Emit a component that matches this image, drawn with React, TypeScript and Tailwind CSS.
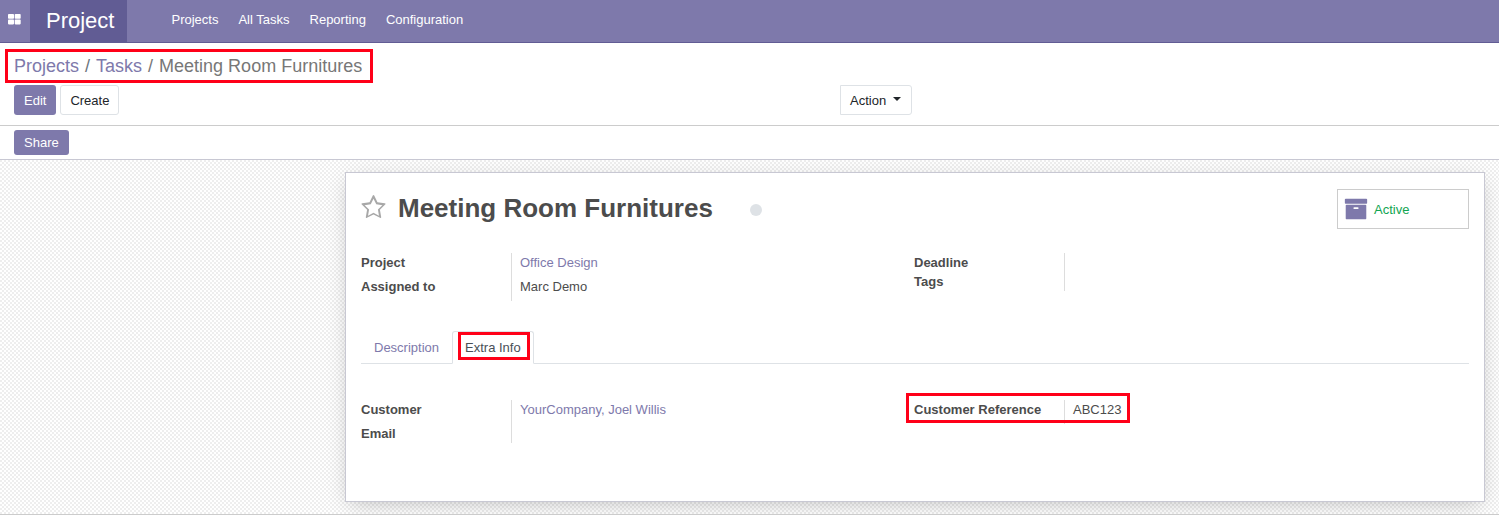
import React from "react";

const RED_BOX = "pointer-events-none absolute border-3 border-[#ff0018]";

function GridIcon() {
  return (
    <svg viewBox="0 0 13 11" className="h-[11px] w-[13px]" fill="currentColor" aria-hidden="true">
      <rect x="0" y="0" width="6" height="4.8" rx="0.8" />
      <rect x="6.7" y="0" width="6" height="4.8" rx="0.8" />
      <rect x="0" y="5.6" width="6" height="4.8" rx="0.8" />
      <rect x="6.7" y="5.6" width="6" height="4.8" rx="0.8" />
    </svg>
  );
}

function StarIcon() {
  return (
    <svg viewBox="0 0 1664 1792" className="h-[26px] w-[25px]" fill="currentColor" aria-hidden="true">
      <path d="M1137 1004l306-297-422-62-189-382-189 382-422 62 306 297-73 421 378-199 377 199zM1664 615q0 22-26 48l-363 354 86 500q1 7 1 20 0 50-41 50-19 0-40-12l-449-236-449 236q-22 12-40 12-21 0-31.500-14.500t-10.500-35.500q0-6 2-20l86-500-364-354q-25-27-25-48 0-37 56-46l502-73 225-455q19-41 49-41t49 41l225 455 502 73q56 9 56 46z" />
    </svg>
  );
}

function ArchiveIcon() {
  return (
    <svg viewBox="0 0 1792 1792" className="size-[24px]" fill="currentColor" aria-hidden="true">
      <path d="M1088 832q0-26-19-45t-45-19h-256q-26 0-45 19t-19 45 19 45 45 19h256q26 0 45-19t19-45zm576-192v960q0 26-19 45t-45 19h-1408q-26 0-45-19t-19-45v-960q0-26 19-45t45-19h1408q26 0 45 19t19 45zm64-448v256q0 26-19 45t-45 19h-1536q-26 0-45-19t-19-45v-256q0-26 19-45t45-19h1536q26 0 45 19t19 45z" />
    </svg>
  );
}

type FieldProps = { label: string; value?: string; href?: string; highlighted?: boolean };

function Field({ label, value, href, highlighted }: FieldProps) {
  return (
    <div className="relative flex">
      <dt className="w-[150px] shrink-0 font-bold">{label}</dt>
      <dd className={value ? "border-l border-[#dddddd] pb-[5px] pl-2" : "h-[19px] border-l border-[#dddddd]"}>
        {href ? <a href={href} className="text-[#7e79ab]">{value}</a> : value}
      </dd>
      {highlighted && <span className={`${RED_BOX} -top-[7px] -left-[8px] h-[30px] w-[224px]`} />}
    </div>
  );
}

function FieldGroup({ fields }: { fields: FieldProps[] }) {
  return (
    <dl className="flex flex-col">
      {fields.map((f) => (
        <Field key={f.label} {...f} />
      ))}
    </dl>
  );
}

export default function App() {
  return (
    <div className="bg-white font-['Liberation_Sans',Arial,sans-serif] text-[13px] leading-[19px] text-[#4c4c4c]">
      <header className="flex h-[43px] border-b border-[#615c94] bg-[#7e79ab] text-white">
        <button type="button" aria-label="Applications" className="flex w-[30px] items-center justify-center pb-[4px] pr-[2px]">
          <GridIcon />
        </button>
        <a href="#project" className="flex items-center bg-[#615c94] pr-[13px] pb-[2px] pl-4 text-[22px]">
          Project
        </a>
        <nav className="ml-[34px] flex items-center pb-[3px]">
          <a href="#projects" className="px-[10px]">Projects</a>
          <a href="#tasks" className="px-[10px]">All Tasks</a>
          <a href="#reporting" className="px-[10px]">Reporting</a>
          <a href="#configuration" className="px-[10px]">Configuration</a>
        </nav>
      </header>

      <section className="border-b border-[#cccccc] pt-[10px] pb-[10px]">
        <nav aria-label="Breadcrumb" className="flex px-[14px] text-[18px] leading-[27px]">
          <ol className="relative flex">
            <li><a href="#projects" className="text-[#7e79ab]">Projects</a></li>
            <li className="text-[#6c757d] before:px-[6px] before:content-['/']"><a href="#tasks" className="text-[#7e79ab]">Tasks</a></li>
            <li className="text-[#777777] before:px-[6px] before:content-['/']">Meeting Room Furnitures</li>
            <li aria-hidden="true" className={`${RED_BOX} -top-[4px] -right-[11px] -bottom-[3px] -left-[9px]`} />
          </ol>
        </nav>
        <div className="mt-[5px] grid grid-cols-[1fr_659px]">
          <div className="flex gap-1 pl-[14px]">
            <button type="button" className="h-[30px] rounded-[3px] bg-[#7e79ab] px-[10px] text-white">Edit</button>
            <button type="button" className="h-[30px] rounded-[3px] border border-[#dee2e6] px-[9px] text-[#212529]">Create</button>
          </div>
          <div>
            <button type="button" className="flex h-[30px] items-center rounded-r-[3px] border border-[#dee2e6] pr-[10px] pl-[9px] text-[#212529]">
              Action
              <span className="mb-[3px] ml-[7px] border-x-4 border-t-4 border-x-transparent border-t-[#212529]" />
            </button>
          </div>
        </div>
      </section>

      <section className="border-b border-[#c8c8d3] px-[14px] py-1">
        <button type="button" className="block h-[25px] rounded-[3px] bg-[#7e79ab] px-[10px] text-white">Share</button>
      </section>

      <main className="flex overflow-hidden border-b border-[#cccccc] bg-[repeating-conic-gradient(#ffffff_0_25%,#eeeeee_0_50%)] bg-[length:4px_4px] py-3 pr-[14px]">
        <article className="ml-auto w-full max-w-[1140px] border border-[#c8c8d3] bg-white px-[15px] pt-4 pb-[58px] shadow-[0_5px_20px_-5px_rgba(0,0,0,0.25)]">
          <div className="flex items-start justify-between">
            <div className="flex items-center pt-px">
              <button type="button" aria-label="Mark as priority" className="text-[#a8a8a8]"><StarIcon /></button>
              <h1 className="ml-3 text-[26px] leading-[36px] font-bold">Meeting Room Furnitures</h1>
              <button type="button" aria-label="Task status" className="mt-[3px] ml-[37px] size-3 rounded-full bg-[#dee2e6]" />
            </div>
            <button type="button" className="flex h-[40px] w-[132px] items-center border border-[#cccccc] pl-[6px]">
              <span className="text-[#7e79ab]"><ArchiveIcon /></span>
              <span className="ml-[6px] text-[#12a552]">Active</span>
            </button>
          </div>

          <div className="mt-6 grid grid-cols-2 pr-[2px]">
            <FieldGroup
              fields={[
                { label: "Project", value: "Office Design", href: "#office-design" },
                { label: "Assigned to", value: "Marc Demo" },
              ]}
            />
            <FieldGroup fields={[{ label: "Deadline" }, { label: "Tags" }]} />
          </div>

          <div role="tablist" className="mt-[30px] flex border-b border-[#dee2e6]">
            <button type="button" role="tab" aria-selected="false" className="h-[32px] border border-transparent px-3 text-[#7e79ab]">Description</button>
            <button type="button" role="tab" aria-selected="true" className="relative -mb-px h-[33px] rounded-t-[3px] border border-b-white border-[#dee2e6] px-3 text-[#495057]">
              Extra Info
              <span className={`${RED_BOX} top-0 right-[3px] bottom-[3px] left-[5px]`} />
            </button>
          </div>

          <div className="mt-9 grid grid-cols-2 pr-[2px]">
            <FieldGroup
              fields={[
                { label: "Customer", value: "YourCompany, Joel Willis", href: "#joel-willis" },
                { label: "Email" },
              ]}
            />
            <FieldGroup fields={[{ label: "Customer Reference", value: "ABC123", highlighted: true }]} />
          </div>
        </article>
      </main>
    </div>
  );
}
